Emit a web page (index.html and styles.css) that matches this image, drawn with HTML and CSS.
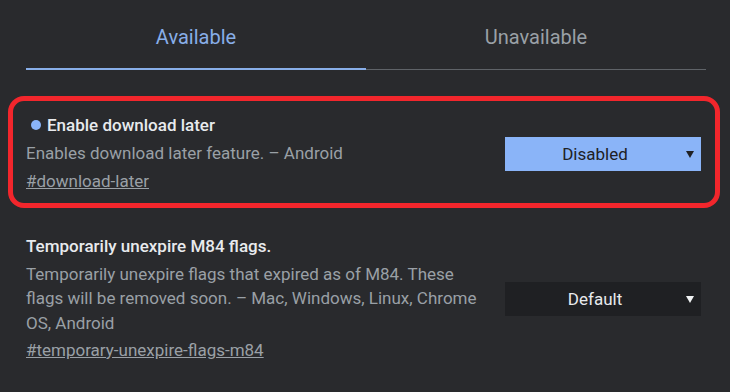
FILE: index.html
```html
<!DOCTYPE html>
<html>
<head>
	<title>Experiments</title>
	<link rel="stylesheet" href="styles.css">
</head>
<body>
	<div class="tabs">
		<div class="tab active">Available</div>
		<div class="tab">Unavailable</div>
	</div>

	<div class="flag highlight">
		<div class="flag-text">
			<h3 class="flag-name"><span class="dot"></span>Enable download later</h3>
			<p class="flag-desc">Enables download later feature. – Android</p>
			<a class="flag-link" href="#download-later">#download-later</a>
		</div>
		<div class="select-wrap">
			<select class="flag-select changed">
				<option>Default</option>
				<option>Enabled</option>
				<option selected>Disabled</option>
			</select>
		</div>
	</div>

	<div class="flag">
		<div class="flag-text">
			<h3 class="flag-name">Temporarily unexpire M84 flags.</h3>
			<p class="flag-desc">Temporarily unexpire flags that expired as of M84. These flags will be removed soon. – Mac, Windows, Linux, Chrome OS, Android</p>
			<a class="flag-link" href="#temporary-unexpire-flags-m84">#temporary-unexpire-flags-m84</a>
		</div>
		<div class="select-wrap">
			<select class="flag-select">
				<option selected>Default</option>
				<option>Enabled</option>
				<option>Disabled</option>
			</select>
		</div>
	</div>
</body>
</html>
```

FILE: styles.css
```css
body {
	margin: 0;
	background: #292a2d;
	color: #e8eaed;
	font-family: Roboto, "Noto Sans", sans-serif;
}

/* tab strip */
.tabs {
	display: flex;
	margin: 0 24px 0 26px;
}
.tab {
	flex: 1;
	text-align: center;
	font-size: 20px;
	line-height: 24px;
	padding: 24px 0 20px;
	color: #9aa0a6;
	border-bottom: 1px solid #5f6368;
	margin-top: 1px;
}
.tab.active {
	color: #88aee8;
	padding-bottom: 19px;
	border-bottom: 2px solid #88aee8;
}

/* flag rows */
.flag {
	display: flex;
	align-items: center;
	margin: 9px 10px 0 8px;
	border: 5px solid transparent;
	border-radius: 16px;
	padding: 12px 14px 10px 13px;
}
.flag.highlight {
	margin-top: 26px;
	border-color: #f2262c;
}
.flag-text {
	flex: 1;
	margin-right: 20px;
}
.flag-name {
	margin: 0;
	font-size: 17px;
	font-weight: 500;
	line-height: 24px;
	color: #e8eaed;
}
.dot {
	display: inline-block;
	width: 10px;
	height: 10px;
	border-radius: 50%;
	background: #8ab4f8;
	margin: 0 6px 1px 5px;
}
.flag-desc {
	margin: 4px 0 0;
	font-size: 17px;
	line-height: 24.5px;
	color: #9aa0a6;
}
.flag-link {
	display: block;
	margin-top: 3px;
	font-size: 17px;
	line-height: 24px;
	color: #9aa0a6;
}

/* dropdown */
.select-wrap {
	position: relative;
	margin-top: 2px;
}
.select-wrap::after {
	content: "";
	position: absolute;
	right: 7px;
	top: 14px;
	border-left: 4px solid transparent;
	border-right: 4px solid transparent;
	border-top: 7px solid #f1f3f4;
	pointer-events: none;
}
.flag-select {
	appearance: none;
	-webkit-appearance: none;
	width: 196px;
	height: 34px;
	border: none;
	border-radius: 0;
	padding: 0 16px 0 0;
	background: #1f2023;
	color: #e8eaed;
	font-family: Roboto, sans-serif;
	font-size: 17px;
	text-align: center;
	text-align-last: center;
}
.flag-select.changed {
	background: #8ab4f8;
	color: #202124;
}
.highlight .select-wrap::after {
	border-top-color: #202124;
}
```
